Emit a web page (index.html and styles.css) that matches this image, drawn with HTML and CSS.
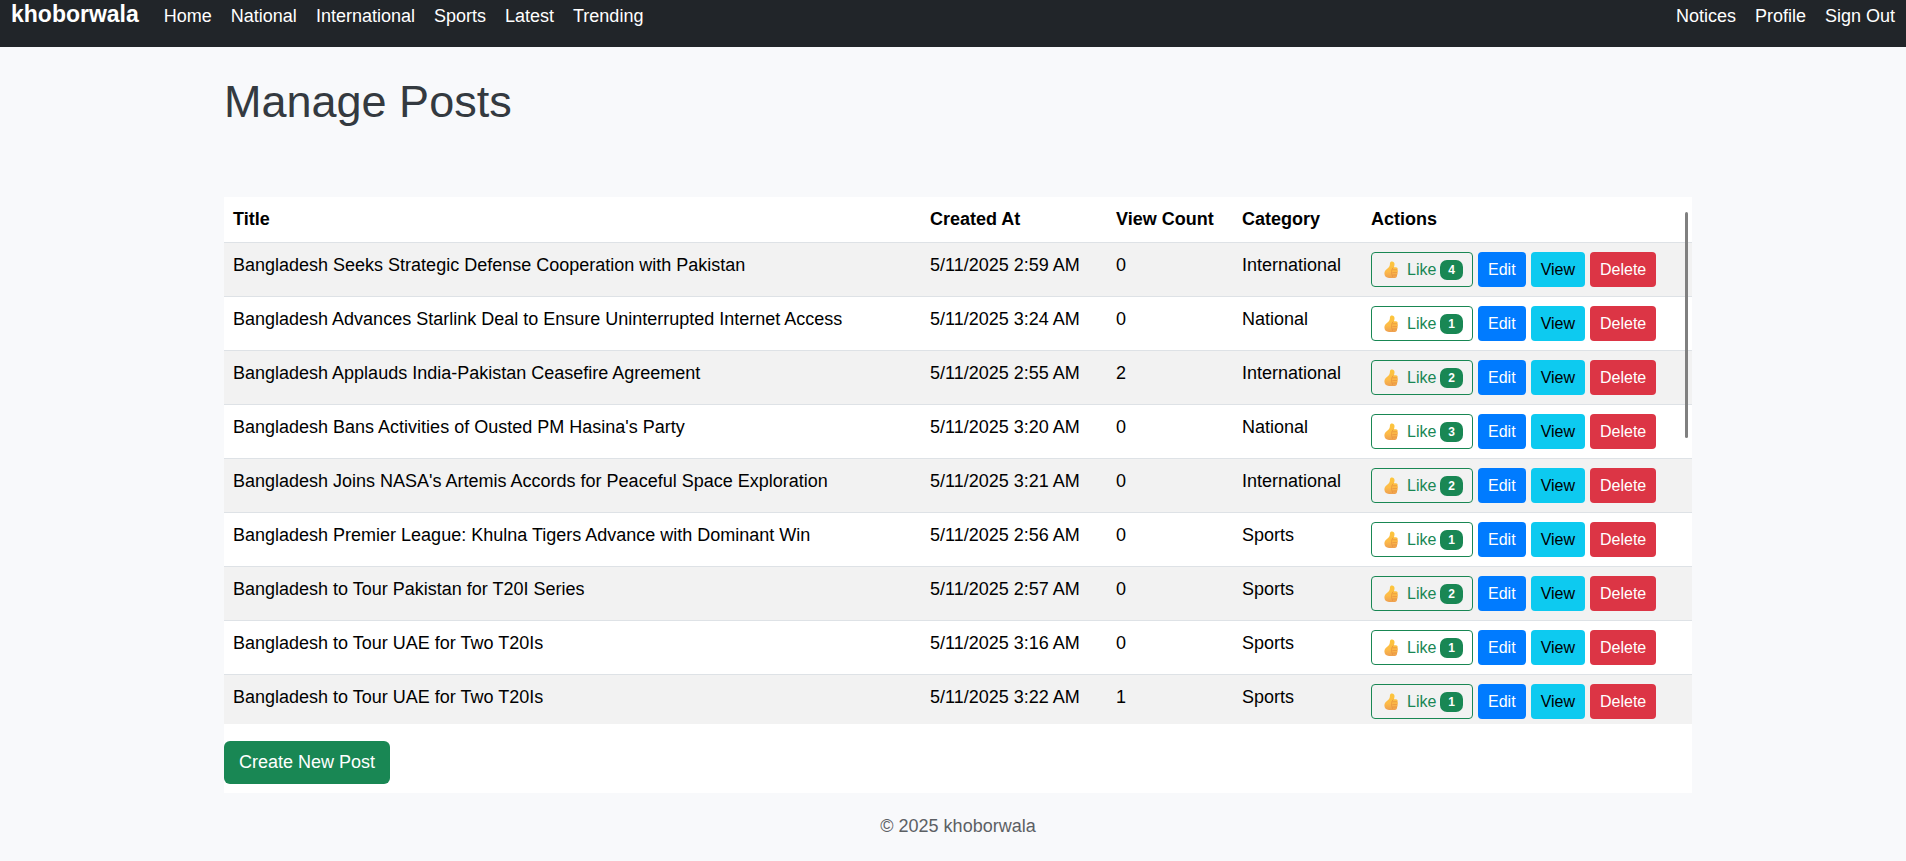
FILE: index.html
```html
<!DOCTYPE html>
<html lang="en">
<head>
<meta charset="utf-8">
<title>Manage Posts - khoborwala</title>
<link rel="stylesheet" href="styles.css">
</head>
<body>
<svg class="sprite" aria-hidden="true">
  <defs>
    <linearGradient id="skin" x1="0" y1="0" x2="0" y2="1">
      <stop offset="0" stop-color="#fcc63a"/>
      <stop offset="0.6" stop-color="#fdbb48"/>
      <stop offset="1" stop-color="#eea050"/>
    </linearGradient>
  </defs>
  <symbol id="thumb" viewBox="0 0 14 18">
    <path fill="url(#skin)" d="M7.200 .6C9 .1 10.600 1.200 10.500 3.200c0 1.300-.3 2-.5 3h2c1.500 0 2.100 1.600 1.300 2.500.9.800.8 2 0 2.700.6.900.4 2-.3 2.500.3 1.700-.6 3.100-2.200 3.100H5C2.200 17 .4 15.300.4 12.600.4 10.300 1.500 8.900 3.200 7.700 5 6.500 5.800 5.300 5.900 3.300 5.900 2.100 6.200 1 7.200 .6z"/>
    <path fill="none" stroke="#e58f3c" stroke-width=".7" stroke-linecap="round" d="M8.800 8.800h4.200M8.800 11.400h4.200M8.800 14h3.900M8.800 6.900c-1.600 1.700-1.800 5.900-.3 8.600"/>
  </symbol>
</svg>
<header class="navbar">
  <a class="brand" href="#">khoborwala</a>
  <nav class="nav-links">
    <a href="#">Home</a>
    <a href="#">National</a>
    <a href="#">International</a>
    <a href="#">Sports</a>
    <a href="#">Latest</a>
    <a href="#">Trending</a>
  </nav>
  <nav class="nav-links account">
    <a href="#">Notices</a>
    <a href="#">Profile</a>
    <a href="#">Sign Out</a>
  </nav>
</header>
<main class="container">
  <h1>Manage Posts</h1>
  <section class="card">
    <div class="table-wrap">
      <table>
        <colgroup><col><col class="col-date"><col class="col-count"><col class="col-category"><col class="col-actions"></colgroup>
        <thead><tr><th>Title</th><th>Created At</th><th>View Count</th><th>Category</th><th>Actions</th></tr></thead>
        <tbody id="posts"></tbody>
      </table>
      <div class="scroll-thumb"></div>
    </div>
    <div class="card-footer"><button class="btn create" type="button">Create New Post</button></div>
  </section>
  <footer>© 2025 khoborwala</footer>
</main>
<script src="posts.js"></script>
</body>
</html>
```
FILE: styles.css
```css
* { box-sizing: border-box; }

body {
  margin: 0;
  background: #f8f9fb;
  color: #212529;
  font: 18px/27px "Liberation Sans", Arial, sans-serif;
}

a { color: inherit; text-decoration: none; }

.sprite { position: absolute; width: 0; height: 0; }

.navbar {
  display: flex;
  align-items: baseline;
  padding: 0 11px 17px;
  background: #212529;
  color: #fff;
}

.brand { font-size: 23px; font-weight: 700; line-height: 28px; }
.nav-links { display: flex; gap: 19px; margin-left: 25px; }
.account { margin-left: auto; }

.container { padding: 28px 214px 0 224px; }

h1 {
  margin: 0;
  color: #343a40;
  font-size: 45px;
  font-weight: 400;
  line-height: 54px;
}

.card { margin-top: 68px; background: #fff; }
.table-wrap { position: relative; height: 527px; overflow: hidden; }

table { width: 100%; border-collapse: collapse; table-layout: fixed; color: #000; }
.col-date { width: 186px; }
.col-count { width: 126px; }
.col-category { width: 129px; }
.col-actions { width: 330px; }

th, td {
  padding: 9px;
  border-bottom: 1px solid #dee2e6;
  text-align: left;
  vertical-align: top;
}
tbody tr:nth-child(odd) { background: #f2f2f2; }

.actions { display: flex; gap: 5px; }

.btn {
  margin: 0;
  padding: 0 9px;
  border: 1px solid transparent;
  border-radius: 4px;
  color: #fff;
  font: 16px/33px "Liberation Sans", Arial, sans-serif;
}
.like {
  display: flex;
  align-items: center;
  padding: 0 9px 0 12px;
  border-color: #198754;
  background: transparent;
  color: #198754;
}
.like svg { width: 14px; height: 18px; margin-right: 9px; }
.badge {
  margin-left: 4px;
  padding: 0 8px;
  border-radius: 7px;
  background: #198754;
  color: #fff;
  font-size: 12px;
  font-weight: 700;
  line-height: 20px;
}
.edit { background: #007bff; }
.view { background: #0dcaf0; color: #000; }
.delete { background: #dc3545; }

.scroll-thumb {
  position: absolute;
  top: 15px;
  right: 4px;
  width: 3px;
  height: 226px;
  border-radius: 2px;
  background: #808080;
}

.card-footer { padding: 17px 0 9px; }
.create {
  display: block;
  padding: 7px 14px;
  border-radius: 6px;
  background: #198754;
  font-size: 18px;
  line-height: 27px;
}

footer { padding: 20px 0 18px; color: #5c6064; text-align: center; }
```
FILE: posts.js
```js
const posts = [
  ["Bangladesh Seeks Strategic Defense Cooperation with Pakistan", "2:59", 0, "International", 4],
  ["Bangladesh Advances Starlink Deal to Ensure Uninterrupted Internet Access", "3:24", 0, "National", 1],
  ["Bangladesh Applauds India-Pakistan Ceasefire Agreement", "2:55", 2, "International", 2],
  ["Bangladesh Bans Activities of Ousted PM Hasina's Party", "3:20", 0, "National", 3],
  ["Bangladesh Joins NASA's Artemis Accords for Peaceful Space Exploration", "3:21", 0, "International", 2],
  ["Bangladesh Premier League: Khulna Tigers Advance with Dominant Win", "2:56", 0, "Sports", 1],
  ["Bangladesh to Tour Pakistan for T20I Series", "2:57", 0, "Sports", 2],
  ["Bangladesh to Tour UAE for Two T20Is", "3:16", 0, "Sports", 1],
  ["Bangladesh to Tour UAE for Two T20Is", "3:22", 1, "Sports", 1]
];

document.getElementById("posts").innerHTML = posts.map(([title, time, views, category, likes]) => `
  <tr>
    <td>${title}</td>
    <td>5/11/2025 ${time} AM</td>
    <td>${views}</td>
    <td>${category}</td>
    <td><div class="actions">
      <button class="btn like" type="button"><svg aria-hidden="true"><use href="#thumb"/></svg>Like<span class="badge">${likes}</span></button>
      <button class="btn edit" type="button">Edit</button>
      <button class="btn view" type="button">View</button>
      <button class="btn delete" type="button">Delete</button>
    </div></td>
  </tr>`).join("");
```
